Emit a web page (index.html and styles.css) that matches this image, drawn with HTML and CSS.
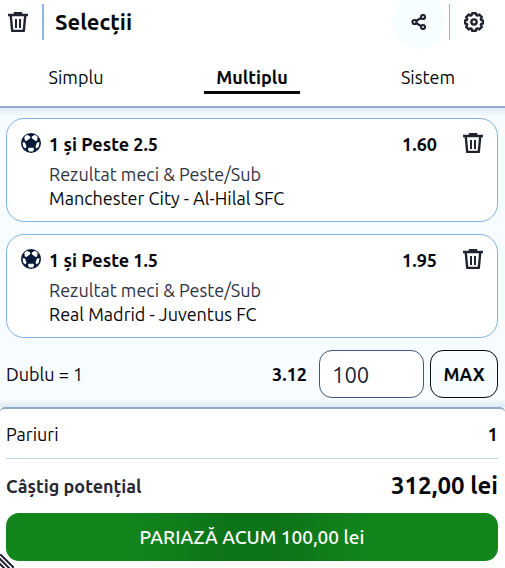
FILE: index.html
```html
<!DOCTYPE html>
<html lang="ro">
<head>
  <meta charset="UTF-8" />
  <meta name="viewport" content="width=device-width, initial-scale=1.0"/>
  <title>Selecții</title>
  <link rel="stylesheet" href="styles.css">
</head>
<body>
  <!-- Shared icons -->
  <svg class="sprite" aria-hidden="true">
    <symbol id="icon-trash" viewBox="0 0 20 20">
      <path d="M0 3h20M7 2.500V1h6v1.500" fill="none" stroke="currentColor" stroke-width="2.400"/>
      <path d="M2.800 4l1.400 15h11.600l1.400-15" fill="none" stroke="currentColor" stroke-width="2.400" stroke-linejoin="round"/>
      <path d="M8 7v9M12 7v9" fill="none" stroke="currentColor" stroke-width="2"/>
    </symbol>
    <symbol id="icon-ball" viewBox="0 0 20 20">
      <circle cx="10" cy="10" r="10" fill="#061a38"/>
      <path d="M9.200 3.600L6 1.800 3.300 4l.6 3.400 1.500.5 3.800-2.700zM10.800 3.600L14 1.800 16.700 4l-.6 3.400-1.500.5-3.800-2.700zM1.500 9.200l2.500.3 1.600 4.200-1.300 1.700-2-1.600zM18.500 9.200l-2.500.3-1.600 4.200 1.300 1.700 2-1.600zM7.600 14.800h4.800l.8 1.800-1.500 1.900H8.300l-1.500-1.900z" fill="#fff"/>
    </symbol>
  </svg>

  <header class="header">
    <div class="toolbar">
      <button class="icon-btn" aria-label="Șterge tot"><svg class="icon"><use href="#icon-trash"/></svg></button>
      <h1 class="title">Selecții</h1>
      <button class="icon-btn share" aria-label="Distribuie">
        <svg class="icon-small" viewBox="0 0 16 16" fill="none" stroke="currentColor" stroke-width="2.200">
          <circle cx="3.500" cy="8" r="2"/>
          <circle cx="12" cy="3" r="2"/>
          <circle cx="12" cy="13" r="2"/>
          <path d="M5 7l5-3M5 9l5 3"/>
        </svg>
      </button>
      <button class="icon-btn settings" aria-label="Setări">
        <svg class="icon" viewBox="0 0 20 20" fill="none" stroke="currentColor" stroke-width="2.400" stroke-linejoin="round">
          <path d="M8.200 1.200h3.600l.6 2 1 .4 1.900-1 2.500 2.500-1 1.900.4 1 2 .6v2.800l-2 .6-.4 1 1 1.900-2.500 2.500-1.900-1-1 .4-.6 2H8.200l-.6-2-1-.4-1.900 1-2.500-2.500 1-1.900-.4-1-2-.6V8.600l2-.6.4-1-1-1.900 2.500-2.500 1.900 1 1-.4z"/>
          <circle cx="10" cy="10" r="2.600"/>
        </svg>
      </button>
    </div>
    <nav class="tabs">
      <a href="#" class="tab">Simplu</a>
      <a href="#" class="tab active">Multiplu</a>
      <a href="#" class="tab">Sistem</a>
    </nav>
  </header>

  <main class="selections">
    <article class="card">
      <svg class="icon"><use href="#icon-ball"/></svg>
      <div class="info">
        <h2 class="pick">1 şi Peste 2.5</h2>
        <p class="market">Rezultat meci &amp; Peste/Sub</p>
        <p class="match">Manchester City - Al-Hilal SFC</p>
      </div>
      <strong class="odds">1.60</strong>
      <button class="icon-btn" aria-label="Șterge selecția"><svg class="icon"><use href="#icon-trash"/></svg></button>
    </article>

    <article class="card">
      <svg class="icon"><use href="#icon-ball"/></svg>
      <div class="info">
        <h2 class="pick">1 şi Peste 1.5</h2>
        <p class="market">Rezultat meci &amp; Peste/Sub</p>
        <p class="match">Real Madrid - Juventus FC</p>
      </div>
      <strong class="odds">1.95</strong>
      <button class="icon-btn" aria-label="Șterge selecția"><svg class="icon"><use href="#icon-trash"/></svg></button>
    </article>

    <div class="stake">
      <label for="stake-input" class="stake-label">Dublu = 1</label>
      <strong>3.12</strong>
      <input type="text" id="stake-input" class="stake-input" inputmode="numeric" value="100" />
      <button class="max-btn">MAX</button>
    </div>
  </main>

  <footer class="summary">
    <div class="row bets">
      <span>Pariuri</span>
      <strong>1</strong>
    </div>
    <div class="row win">
      <strong class="win-label">Câștig potențial</strong>
      <strong class="win-amount">312,00 lei</strong>
    </div>
    <button class="bet-btn">PARIAZĂ ACUM 100,00 lei</button>
    <!-- Resize handle -->
    <svg class="grip" viewBox="0 0 14 14" fill="none" stroke="#202431" stroke-width="2" aria-hidden="true">
      <path d="M-1-1l16 16M-1 4l11 11M-1 9l6 6"/>
    </svg>
  </footer>
</body>
</html>
```
FILE: styles.css
```css
* {
  box-sizing: border-box;
}

body {
  margin: 0;
  font-family: Ubuntu, "Noto Sans", sans-serif;
  font-size: 18px;
  line-height: 24px;
  color: #05070c;
  background: #f6fcff;
}

h1, h2, p {
  margin: 0;
}

button {
  font: inherit;
  color: inherit;
  cursor: pointer;
}

.sprite {
  position: absolute;
  width: 0;
  height: 0;
}

.icon {
  display: block;
  width: 20px;
  height: 20px;
  flex: none;
}

.icon-small {
  display: block;
  width: 16px;
  height: 16px;
}

.icon-btn {
  display: flex;
  align-items: center;
  justify-content: center;
  flex: none;
  padding: 0;
  border: none;
  background: none;
  color: #202431;
}

/* Header */
.header {
  background: #fff;
  border-bottom: 2px solid #8faccb;
}

.toolbar {
  display: flex;
  align-items: center;
  height: 54px;
  padding: 0 8px 10px;
}

.title {
  flex: 1;
  margin-left: 14px;
  padding-left: 11px;
  border-left: 2px solid #8ab4ee;
  font-size: 22px;
  line-height: 36px;
}

.share {
  width: 54px;
  height: 54px;
  border-radius: 50%;
  background: #f6feff;
}

.settings {
  height: 36px;
  margin-left: 3px;
  padding: 0 13px 0 14px;
  border-left: 1px solid #8ab4ee;
}

.tabs {
  display: flex;
  justify-content: space-between;
  height: 52px;
  padding: 11px 29px 0 28px;
}

.tab {
  width: 96px;
  height: 29px;
  text-align: center;
  color: inherit;
  text-decoration: none;
}

.tab.active {
  font-weight: bold;
  border-bottom: 3px solid #05070c;
}

/* Selections */
.selections {
  display: flex;
  flex-direction: column;
  gap: 12px;
  padding: 10px 7px 9px 6px;
  background: linear-gradient(#deebf6, #f6fcff 8px, #f6fcff calc(100% - 8px), #dceaf5);
}

.card {
  display: flex;
  align-items: flex-start;
  padding: 14px 14px 11px;
  border: 1px solid #84b1e3;
  border-radius: 18px;
  background: #fff;
}

.info {
  flex: 1;
  margin-left: 8px;
}

.pick {
  margin-bottom: 7px;
  font-size: 18px;
  line-height: 22px;
}

.market {
  color: #303544;
}

.odds {
  margin-right: 26px;
  line-height: 22px;
}

.stake {
  display: flex;
  align-items: center;
}

.stake-label {
  flex: 1;
}

.stake-input {
  width: 105px;
  height: 48px;
  margin: 0 6px 0 12px;
  padding: 0 12px;
  border: 1px solid #40557f;
  border-radius: 13px;
  background: #fff;
  color: #202431;
  font: inherit;
  font-size: 22px;
}

.max-btn {
  width: 68px;
  height: 48px;
  padding: 0;
  border: 1px solid #090b10;
  border-radius: 13px;
  background: none;
  font-weight: bold;
}

/* Summary */
.summary {
  position: relative;
  padding: 0 7px 7px 6px;
  border-top: 2px solid #8faccb;
  border-radius: 5px 5px 0 0;
  background: #fff;
}

.row {
  display: flex;
  align-items: center;
  justify-content: space-between;
}

.bets {
  height: 50px;
  border-bottom: 1px solid #bddceb;
}

.win {
  height: 54px;
}

.win-label {
  color: #272a35;
}

.win-amount {
  font-size: 24px;
}

.bet-btn {
  display: block;
  width: 100%;
  height: 48px;
  border: none;
  border-radius: 13px;
  background: linear-gradient(90deg, #12861d 25%, #0d7319 45%, #0d7319 55%, #12861d 75%);
  color: #fff;
  font-size: 19px;
  font-weight: 500;
}

.grip {
  position: absolute;
  left: 0;
  bottom: 0;
  width: 14px;
  height: 14px;
}
```
